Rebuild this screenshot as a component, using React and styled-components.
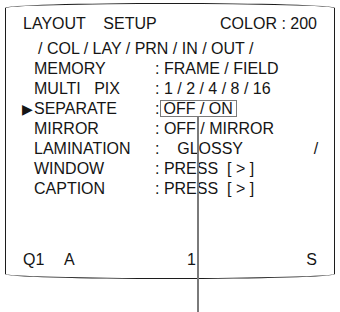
import React from "react";
import styled, { createGlobalStyle } from "styled-components";

const Global = createGlobalStyle`
  html, body {
    margin: 0;
    padding: 0;
    background: #ffffff;
  }
  body {
    font-family: "Liberation Sans", Arial, sans-serif;
    color: #151515;
  }
`;

const Page = styled.div`
  width: 340px;
  height: 312px;
  padding: 3px 0 0 5px;
  box-sizing: border-box;
  overflow: hidden;
`;

const Screen = styled.div`
  width: 330px;
  height: 276px;
  box-sizing: border-box;
  border: 1.5px solid #1c1c1c;
  border-radius: 165px / 5px;
  padding: 10px 17px 8px 17px;
  display: flex;
  flex-direction: column;
  font-size: 16px;
  line-height: 20px;
`;

const TitleRow = styled.div`
  display: flex;
  justify-content: space-between;
  margin-bottom: 5px;
  white-space: pre;
`;

const Tabs = styled.div`
  padding-left: 15px;
  white-space: pre;
`;

const Row = styled.div`
  display: grid;
  grid-template-columns: 11px 121px 1fr;
  align-items: center;
  white-space: pre;
`;

const Marker = styled.span`
  font-size: 14px;
  line-height: 20px;
  margin-left: -1px;
`;

const Value = styled.span`
  white-space: pre;
`;

const Boxed = styled.span`
  position: relative;
  display: inline-block;
  border: 1.5px solid #7a7a7a;
  padding: 0 3px 0 2px;
  margin-left: 1px;
  line-height: 15px;

  &::after {
    content: "";
    position: absolute;
    left: 36px;
    top: 100%;
    width: 1.5px;
    height: 197px;
    background: #7a7a7a;
  }
`;

const Footer = styled.div`
  margin-top: auto;
  display: grid;
  grid-template-columns: 41px 123px 1fr auto;
  white-space: pre;
`;

const rows = [
  { label: "MEMORY", value: ": FRAME / FIELD" },
  { label: "MULTI   PIX", value: ": 1 / 2 / 4 / 8 / 16" },
  { label: "SEPARATE", value: null, selected: true },
  { label: "MIRROR", value: ": OFF / MIRROR" },
  { label: "LAMINATION", value: ":    GLOSSY                /" },
  { label: "WINDOW", value: ": PRESS  [ > ]" },
  { label: "CAPTION", value: ": PRESS  [ > ]" },
];

export default function App() {
  return (
    <Page>
      <Global />
      <Screen>
        <TitleRow>
          <span>{"LAYOUT    SETUP"}</span>
          <span>COLOR : 200</span>
        </TitleRow>
        <Tabs>{"/ COL / LAY / PRN / IN / OUT /"}</Tabs>
        {rows.map((r) => (
          <Row key={r.label}>
            <Marker>{r.selected ? "▶" : ""}</Marker>
            <span>{r.label}</span>
            {r.value ? (
              <Value>{r.value}</Value>
            ) : (
              <Value>
                :<Boxed>OFF / ON</Boxed>
              </Value>
            )}
          </Row>
        ))}
        <Footer>
          <span>Q1</span>
          <span>A</span>
          <span>1</span>
          <span>S</span>
        </Footer>
      </Screen>
    </Page>
  );
}
